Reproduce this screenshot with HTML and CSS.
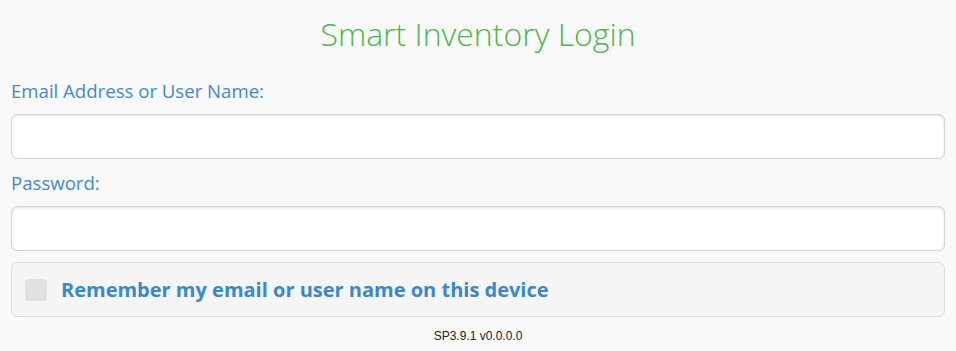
FILE: index.html
```html
<!DOCTYPE html>
<html lang="en">
<head>
<meta charset="utf-8">
<title>Smart Inventory Login</title>
<link rel="stylesheet" href="styles.css">
</head>
<body>
<main class="page">
  <h1 class="title">Smart Inventory Login</h1>
  <form class="form">
    <label class="label" for="user">Email Address or User Name:</label>
    <input class="input" id="user" type="text">
    <label class="label label-pw" for="pw">Password:</label>
    <input class="input" id="pw" type="password">
    <label class="remember">
      <span class="check"></span>
      <span class="remember-text">Remember my email or user name on this device</span>
    </label>
  </form>
  <p class="version">SP3.9.1 v0.0.0.0</p>
</main>
</body>
</html>
```

FILE: styles.css
```css
html, body {
  margin: 0;
  padding: 0;
  background: #f9f9f9;
}
body {
  font-family: "Open Sans", "Liberation Sans", sans-serif;
}
.page {
  padding: 12px 11px 0 11px;
}
.title {
  margin: 0;
  font-weight: 300;
  font-size: 32px;
  line-height: 44px;
  color: #4bb74b;
  text-align: center;
}
.form {
  display: flex;
  flex-direction: column;
  margin-top: 22px;
}
.label {
  font-size: 18.6px;
  line-height: 25px;
  color: #3f89d6;
  margin-bottom: 11px;
}
.label-pw {
  margin-top: 11px;
}
.input {
  box-sizing: border-box;
  height: 45px;
  width: 100%;
  margin: 0;
  border: 1px solid #d4d4d4;
  border-radius: 6px;
  background: #fff;
  box-shadow: inset 0 1px 3px rgba(0, 0, 0, 0.13);
  outline: none;
  font-family: inherit;
  font-size: 16px;
}
.remember {
  box-sizing: border-box;
  margin-top: 11px;
  height: 55px;
  display: flex;
  align-items: center;
  gap: 14px;
  padding-left: 13px;
  background: #f5f5f5;
  border: 1px solid #dcdcdc;
  border-radius: 6px;
}
.check {
  width: 22px;
  height: 22px;
  border-radius: 4px;
  background: #e1e1e1;
  flex: none;
}
.remember-text {
  font-weight: 700;
  font-size: 20px;
  color: #3a87d0;
}
.version {
  margin: 12px 0 0 0;
  font-family: "Liberation Sans", Arial, sans-serif;
  font-size: 12px;
  line-height: 14px;
  color: #222;
  text-align: center;
}
```
